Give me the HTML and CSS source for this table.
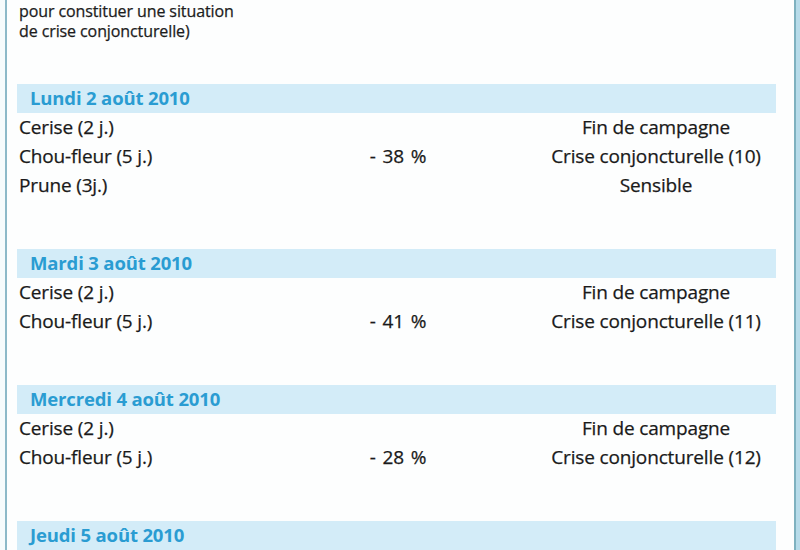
FILE: index.html
```html
<!DOCTYPE html>
<html lang="fr">
<head>
<meta charset="utf-8">
<link rel="stylesheet" href="styles.css">
</head>
<body>
<div class="frame">
  <p class="intro">pour constituer une situation<br>de crise conjoncturelle)</p>

  <section class="day">
    <h2 class="band">Lundi 2 août 2010</h2>
    <div class="row"><span class="c1">Cerise (2 j.)</span><span class="c2"></span><span class="c3">Fin de campagne</span></div>
    <div class="row"><span class="c1">Chou-fleur (5 j.)</span><span class="c2">- 38 %</span><span class="c3">Crise conjoncturelle (10)</span></div>
    <div class="row"><span class="c1">Prune (3j.)</span><span class="c2"></span><span class="c3">Sensible</span></div>
  </section>

  <section class="day">
    <h2 class="band">Mardi 3 août 2010</h2>
    <div class="row"><span class="c1">Cerise (2 j.)</span><span class="c2"></span><span class="c3">Fin de campagne</span></div>
    <div class="row"><span class="c1">Chou-fleur (5 j.)</span><span class="c2">- 41 %</span><span class="c3">Crise conjoncturelle (11)</span></div>
  </section>

  <section class="day">
    <h2 class="band">Mercredi 4 août 2010</h2>
    <div class="row"><span class="c1">Cerise (2 j.)</span><span class="c2"></span><span class="c3">Fin de campagne</span></div>
    <div class="row"><span class="c1">Chou-fleur (5 j.)</span><span class="c2">- 28 %</span><span class="c3">Crise conjoncturelle (12)</span></div>
  </section>

  <section class="day">
    <h2 class="band">Jeudi 5 août 2010</h2>
  </section>
</div>
</body>
</html>
```

FILE: styles.css
```css
html, body {
  margin: 0;
  padding: 0;
  height: 550px;
  overflow: hidden;
  background: #f6fbfc;
}
body {
  font-family: "Open Sans", "Noto Sans", sans-serif;
  color: #1a1a1a;
}
.frame {
  margin-left: 5px;
  width: 777px;
  height: 550px;
  border-left: 2px solid #8cb9c8;
  border-right: 2px solid #7eb1bf;
  background: #fdfefe;
  box-shadow: 8px 0 0 #b7dbe9, 15px 0 0 #ebe4ea;
  padding: 0 0 0 10px;
  box-sizing: content-box;
}
.intro {
  margin: 0;
  padding: 1px 0 0 2px;
  font-size: 16px;
  letter-spacing: -0.1px;
  line-height: 20px;
  color: #1c1c1c;
  -webkit-text-stroke: 0.25px #1c1c1c;
  height: 84px;
  box-sizing: border-box;
}
.day {
  margin-bottom: 49px;
}
.band {
  margin: 0;
  width: 759px;
  height: 29px;
  box-sizing: border-box;
  background: #d3ecf8;
  color: #2a9cd2;
  font-size: 18.5px;
  font-weight: 700;
  letter-spacing: -0.15px;
  line-height: 28px;
  padding-left: 13px;
}
.row {
  display: grid;
  grid-template-columns: 303px 156px 300px;
  height: 29px;
  align-items: center;
  font-size: 19px;
  letter-spacing: -0.15px;
  line-height: 29px;
  -webkit-text-stroke: 0.25px #1a1a1a;
}
.c1 {
  padding-left: 2px;
}
.c2 {
  text-align: center;
  word-spacing: 2px;
}
.c3 {
  padding-left: 60px;
  text-align: center;
}
```
